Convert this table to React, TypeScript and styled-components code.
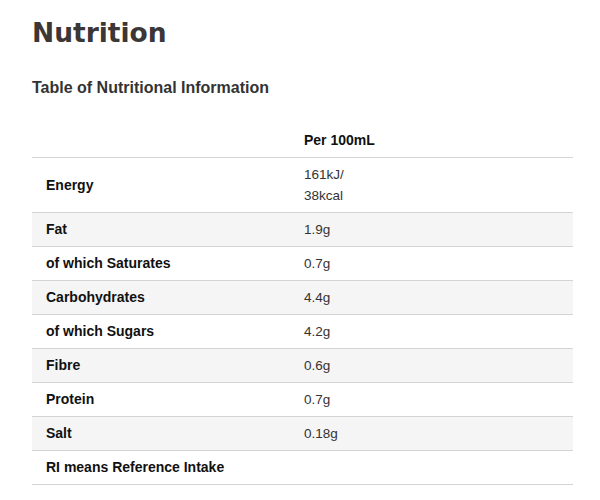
import React from "react";
import styled, { createGlobalStyle } from "styled-components";

const Global = createGlobalStyle`
  body { margin: 0; background: #fff; font-family: "Liberation Sans", Arial, sans-serif; }
`;

const Page = styled.div`
  padding: 16px 27px 0 32px;
`;

const Title = styled.h1`
  margin: 0;
  font-family: "DejaVu Sans", Verdana, sans-serif;
  font-weight: 700;
  font-size: 26.5px;
  line-height: 34px;
  color: #3a3736;
`;

const Subtitle = styled.h2`
  margin: 28px 0 0;
  font-family: "Liberation Sans", Arial, sans-serif;
  font-weight: 700;
  font-size: 16px;
  line-height: 20px;
  color: #333;
`;

const Table = styled.table`
  margin-top: 26px;
  width: 541px;
  border-collapse: collapse;
  font-size: 13.5px;
`;

const Row = styled.tr<{ $shade?: boolean }>`
  background: ${(p) => (p.$shade ? "#f5f5f5" : "#fff")};
  border-bottom: 1px solid #d4d4d4;
`;

const HeadCell = styled.th`
  text-align: left;
  font-weight: 700;
  font-size: 14px;
  color: #111;
  padding: 6px 14px;
  line-height: 21px;
`;

const Label = styled.th`
  text-align: left;
  font-weight: 700;
  font-size: 14px;
  color: #111;
  padding: 6px 14px;
  line-height: 21px;
  width: 230px;
`;

const Value = styled.td`
  color: #333;
  padding: 6px 14px;
  line-height: 21px;
`;

const rows: [string, React.ReactNode][] = [
  ["Energy", <>161kJ/<br />38kcal</>],
  ["Fat", "1.9g"],
  ["of which Saturates", "0.7g"],
  ["Carbohydrates", "4.4g"],
  ["of which Sugars", "4.2g"],
  ["Fibre", "0.6g"],
  ["Protein", "0.7g"],
  ["Salt", "0.18g"],
  ["RI means Reference Intake", ""],
];

export default function App() {
  return (
    <Page>
      <Global />
      <Title>Nutrition</Title>
      <Subtitle>Table of Nutritional Information</Subtitle>
      <Table>
        <thead>
          <Row>
            <HeadCell />
            <HeadCell>Per 100mL</HeadCell>
          </Row>
        </thead>
        <tbody>
          {rows.map(([k, v], i) => (
            <Row key={k} $shade={i % 2 === 1}>
              <Label>{k}</Label>
              <Value>{v}</Value>
            </Row>
          ))}
        </tbody>
      </Table>
    </Page>
  );
}
